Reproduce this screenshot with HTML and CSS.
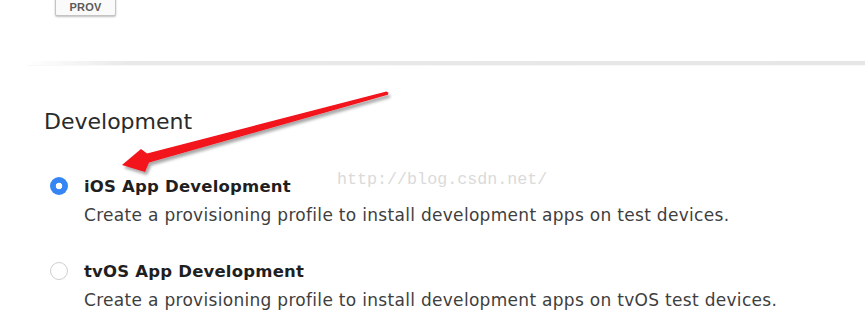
FILE: index.html
```html
<!DOCTYPE html>
<html>
<head>
<meta charset="utf-8">
<link rel="stylesheet" href="styles.css">
</head>
<body>
<div class="page">
  <div class="top">
    <div class="prov">PROV</div>
  </div>
  <div class="divider"></div>
  <section class="dev">
    <h2 class="heading">Development</h2>
    <div class="option">
      <span class="radio checked"></span>
      <div class="text">
        <div class="title">iOS App Development</div>
        <div class="desc">Create a provisioning profile to install development apps on test devices.</div>
      </div>
    </div>
    <div class="option second">
      <span class="radio"></span>
      <div class="text">
        <div class="title">tvOS App Development</div>
        <div class="desc">Create a provisioning profile to install development apps on tvOS test devices.</div>
      </div>
    </div>
  </section>
  <div class="watermark">http://blog.csdn.net/</div>
  <svg class="arrow" width="865" height="336" viewBox="0 0 865 336">
    <defs>
      <filter id="sh" x="-10%" y="-30%" width="120%" height="160%">
        <feDropShadow dx="2" dy="3" stdDeviation="1.5" flood-color="#000" flood-opacity="0.35"/>
      </filter>
    </defs>
    <polygon filter="url(#sh)" fill="#f2121b" points="386.4,91.4 147,153.5 141,149 122,165 145,172 149,162.5 387.8,94.8 388.5,92.8"/>
  </svg>
</div>
</body>
</html>
```
FILE: styles.css
```css
html, body {
  margin: 0;
  padding: 0;
  background: #ffffff;
}
.page {
  position: relative;
  width: 865px;
  height: 336px;
  overflow: hidden;
  font-family: "DejaVu Sans", "Liberation Sans", sans-serif;
}
.top {
  padding-left: 55px;
  height: 18px;
}
.prov {
  box-sizing: border-box;
  width: 61px;
  height: 20px;
  margin-top: -4px;
  border: 1px solid #c4c4c4;
  border-radius: 2px;
  background: #fafafa;
  box-shadow: 0 1px 2px rgba(0,0,0,0.25);
  font-family: "Liberation Sans", Arial, sans-serif;
  font-weight: bold;
  font-size: 11px;
  line-height: 20px;
  color: #5a5a5a;
  text-align: center;
  letter-spacing: 0.2px;
}
.divider {
  margin: 47px 0 0 27px;
  height: 4px;
  background: linear-gradient(to right, rgba(232,232,232,0) 0%, #e9e9e9 12%, #e6e6e6 100%);
  box-shadow: 0 1px 1px rgba(0,0,0,0.03);
}
.dev {
  padding-left: 44px;
}
.heading {
  margin: 44px 0 0 0;
  font-weight: normal;
  font-size: 22px;
  line-height: 26px;
  color: #2a2a2a;
}
.option {
  display: flex;
  align-items: flex-start;
  margin-top: 42px;
}
.option.second {
  margin-top: 37px;
}
.radio {
  box-sizing: border-box;
  width: 18px;
  height: 18px;
  margin: 0 0 0 6px;
  border-radius: 50%;
  border: 1.5px solid #cfcfcf;
  background: #fff;
  flex: none;
}
.radio.checked {
  border: none;
  background: radial-gradient(circle, #ffffff 0, #ffffff 3px, #3585f5 3.6px);
}
.text {
  margin-left: 16px;
}
.title {
  font-weight: bold;
  font-size: 16.5px;
  line-height: 20px;
  color: #1f1f1f;
  letter-spacing: 0.2px;
}
.desc {
  margin-top: 8px;
  font-size: 17px;
  line-height: 20px;
  color: #3e3e3e;
  letter-spacing: 0.3px;
}
.watermark {
  position: absolute;
  left: 337px;
  top: 170px;
  font-family: "Liberation Mono", monospace;
  font-size: 16.7px;
  line-height: 20px;
  color: #dadada;
}
.arrow {
  position: absolute;
  left: 0;
  top: 0;
  pointer-events: none;
}
```
